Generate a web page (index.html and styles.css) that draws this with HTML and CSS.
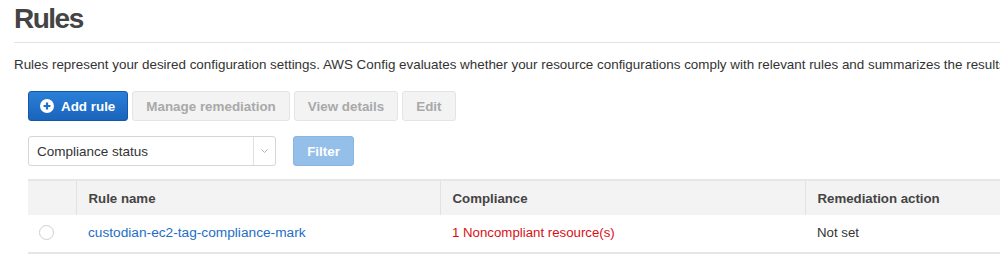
FILE: index.html
```html
<!DOCTYPE html>
<html lang="en">
  <head>
    <meta charset="UTF-8" />
    <title>Rules</title>
    <link rel="stylesheet" href="styles.css">
  </head>
  <body>
    <div class="page">
      <h1 class="page-title">Rules</h1>
      <hr class="divider" />
      <p class="intro">
        Rules represent your desired configuration settings. AWS Config evaluates whether your resource configurations comply with relevant rules and summarizes the results.
      </p>

      <div class="panel">
        <div class="actions">
          <button class="btn btn-primary">
            <svg class="btn-icon" viewBox="0 0 14 14" width="14" height="14">
              <circle cx="7" cy="7" r="7" fill="#fff" />
              <path d="M7 3.6v6.8M3.6 7h6.8" stroke="#1f6fc9" stroke-width="2.2" />
            </svg>
            Add rule
          </button>
          <button class="btn btn-disabled">Manage remediation</button>
          <button class="btn btn-disabled">View details</button>
          <button class="btn btn-disabled">Edit</button>
        </div>

        <div class="filters">
          <div class="select">
            <span class="select-value">Compliance status</span>
            <span class="select-arrow">
              <svg viewBox="0 0 7 4" width="7" height="4">
                <polyline points="0.5,0.5 3.5,3.5 6.5,0.5" fill="none" stroke="#b5b5b5" stroke-width="1" />
              </svg>
            </span>
          </div>
          <button class="btn btn-filter">Filter</button>
        </div>

        <table class="rules-table">
          <thead>
            <tr>
              <th class="col-select"></th>
              <th class="col-name">Rule name</th>
              <th class="col-compliance">Compliance</th>
              <th>Remediation action</th>
            </tr>
          </thead>
          <tbody>
            <tr>
              <td class="col-select"><span class="radio"></span></td>
              <td><a class="rule-link" href="#">custodian-ec2-tag-compliance-mark</a></td>
              <td class="noncompliant">1 Noncompliant resource(s)</td>
              <td>Not set</td>
            </tr>
          </tbody>
        </table>
      </div>
    </div>
  </body>
</html>
```

FILE: styles.css
```css
* {
  margin: 0;
  padding: 0;
  box-sizing: border-box;
}

body {
  font-family: "Liberation Sans", Arial, sans-serif;
  color: #444;
  background: #fff;
  overflow: hidden;
}

.page {
  padding: 2px 0 0 14px;
  width: 1200px;
}

.page-title {
  font-size: 28px;
  line-height: 34px;
  font-weight: bold;
  letter-spacing: -1.5px;
  color: #444;
}

.divider {
  border: none;
  border-top: 1px solid #e3e3e3;
  margin-top: 6px;
}

.intro {
  font-size: 13.4px;
  line-height: 18px;
  color: #333;
  white-space: nowrap;
  margin-top: 13px;
}

.panel {
  padding-left: 14px;
}

.actions {
  display: flex;
  gap: 4px;
  margin-top: 17px;
}

.btn {
  font-family: inherit;
  font-size: 13.4px;
  font-weight: bold;
  height: 30px;
  border-radius: 3px;
  display: inline-flex;
  align-items: center;
  padding: 0 13px;
  cursor: default;
}

.btn-primary {
  background: linear-gradient(#2a7fd8, #1a64bd);
  border: 1px solid #1658a6;
  color: #fff;
  padding: 0 12px 0 11px;
  gap: 7px;
}

.btn-icon {
  display: block;
}

.btn-disabled {
  background: #f3f3f3;
  border: 1px solid #e4e4e4;
  color: #a9a9a9;
}

.filters {
  display: flex;
  align-items: center;
  gap: 17px;
  margin-top: 15px;
}

.select {
  width: 248px;
  height: 30px;
  border: 1px solid #d6d6d6;
  border-radius: 3px;
  display: flex;
  align-items: stretch;
  font-size: 13.5px;
  color: #333;
}

.select-value {
  flex: 1;
  display: flex;
  align-items: center;
  padding-left: 8px;
}

.select-arrow {
  width: 22px;
  border-left: 1px solid #e0e0e0;
  display: flex;
  align-items: center;
  justify-content: center;
}

.btn-filter {
  background: #94bfe9;
  border: 1px solid #8ab6e2;
  color: #fff;
  width: 61px;
  justify-content: center;
  padding: 0;
}

.rules-table {
  margin-top: 13px;
  border-collapse: collapse;
  width: 1100px;
  font-size: 13.25px;
}

.rules-table th {
  background: #f3f3f3;
  border-top: 2px solid #e6e6e6;
  border-left: 1px solid #e2e2e2;
  height: 35px;
  text-align: left;
  font-weight: bold;
  color: #444;
  padding: 0 12px;
}

.rules-table th:first-child {
  border-left: none;
}

.rules-table td {
  height: 38px;
  padding: 0 12px 3px;
  border-bottom: 2px solid #e6e6e6;
  color: #333;
}

.col-select {
  width: 48px;
}

.col-name {
  width: 364px;
}

.col-compliance {
  width: 365px;
}

.radio {
  display: block;
  width: 15px;
  height: 15px;
  border: 1px solid #cfcfcf;
  border-radius: 50%;
  margin-left: -1px;
}

.rule-link {
  color: #1c6ec6;
  text-decoration: none;
  font-size: 13.7px;
}

.rules-table td.noncompliant {
  color: #d80f16;
}
```
